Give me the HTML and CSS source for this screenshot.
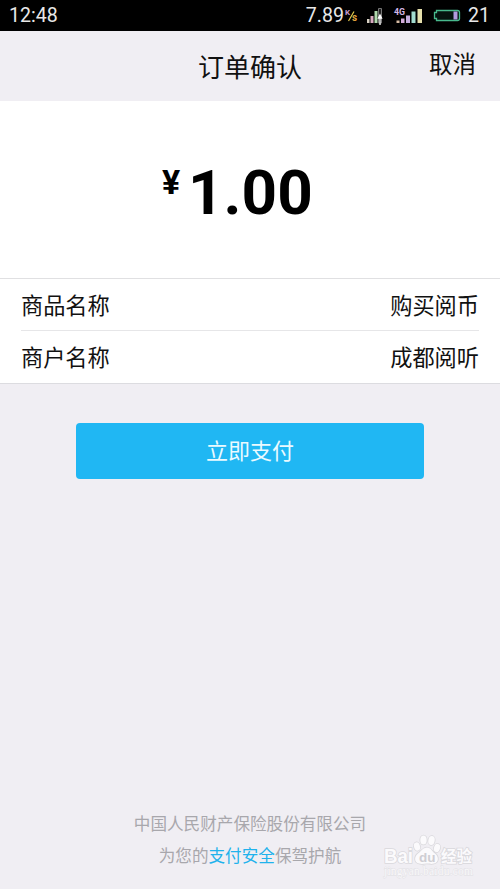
FILE: index.html
```html
<!DOCTYPE html>
<html lang="zh-CN">
<head>
<meta charset="utf-8">
<title>订单确认</title>
<link rel="stylesheet" href="styles.css">
</head>
<body>
<div class="screen">
  <div class="status">
    <span class="clock">12:48</span>
    <span class="rate">7.89</span>
    <svg class="icons" width="124" height="31" viewBox="345 0 124 31">
      <g font-family="Roboto, sans-serif" font-weight="700">
        <text x="346" y="15" font-size="8" fill="#c59bd0">K</text>
        <text x="353" y="21" font-size="10" fill="#dfa13c">s</text>
        <text x="395" y="15" font-size="9.5" fill="#d3b9e6" textLength="11" lengthAdjust="spacingAndGlyphs">4G</text>
      </g>
      <path d="M349.500 21L355 11.500" stroke="#e3c94c" stroke-width="1.200"/>
      <path d="M368 19h2.500v4H368z" fill="#d8d1c4"/>
      <path d="M371.500 16h3v7h-3z" fill="#d9abc0"/>
      <path d="M375.500 11h3v12h-3z" fill="#b0d8ad"/>
      <path d="M379.500 8.500h3V23h-3z" fill="#222" stroke="#777"/>
      <path d="M381 25V15m-1.500 3l1.500-3 1.500 3z" fill="#fff" stroke="#fff" stroke-width="1.300"/>
      <path d="M397.500 20.500h3V23h-3z" fill="#d8bda5"/>
      <path d="M402 18.500h3.500V23H402z" fill="#d4addb"/>
      <path d="M407 15.500h4V23h-4z" fill="#c4addc"/>
      <path d="M412.500 11.500h4V23h-4z" fill="#a3dccf"/>
      <path d="M418.500 9h4.500v14h-4.500z" fill="#e6e0ac"/>
      <path d="M437.500 10.500h21q2 0 2 2v6q0 2-2 2h-21v-2h-2v-6h2z" fill="#06130f" stroke="#48b98d" stroke-width="1.300"/>
      <path d="M454.500 11.500h4v8h-4z" fill="#b19be0"/>
    </svg>
    <span class="level">21</span>
  </div>
  <header class="header">
    <h1 class="title">订单确认</h1>
    <span class="cancel">取消</span>
  </header>
  <section class="price">
    <span class="yen">¥</span><span class="amount">1.00</span>
  </section>
  <section class="details">
    <div class="row"><span>商品名称</span><span>购买阅币</span></div>
    <div class="row"><span>商户名称</span><span>成都阅听</span></div>
  </section>
  <button class="pay">立即支付</button>
  <footer class="footer">
    <p>中国人民财产保险股份有限公司</p>
    <p>为您的<span class="safe">支付安全</span>保驾护航</p>
  </footer>
  <svg class="watermark" width="130" height="64" viewBox="370 825 130 64">
    <g fill="#fbfafc" stroke="#d9d8dc" stroke-width="1.600" paint-order="stroke">
      <ellipse cx="417" cy="846.500" rx="3" ry="4.200" transform="rotate(-15 417 846.500)"/>
      <ellipse cx="423.500" cy="840" rx="3.200" ry="4.500"/>
      <ellipse cx="431.500" cy="840.500" rx="3.200" ry="4.500" transform="rotate(10 431.500 840.500)"/>
      <ellipse cx="437" cy="848" rx="3" ry="4.200" transform="rotate(15 437 848)"/>
      <path d="M427 847.500c4 0 5 4 8 6 4 3 4 9-1 10-3 1-4 0-7 0s-5 1-8 0c-5-1-5-7-1-10 3-2 5-6 9-6z"/>
      <g font-family="Liberation Sans, sans-serif">
        <text x="384" y="862.500" font-size="20" font-weight="700" textLength="29" lengthAdjust="spacingAndGlyphs">Bai</text>
        <text x="441" y="862" font-family="Noto Sans CJK SC, sans-serif" font-weight="700" font-size="15.500">经验</text>
      </g>
    </g>
    <text x="419" y="861.500" font-family="Liberation Sans, sans-serif" font-weight="700" font-size="13.500" fill="#cfced3">du</text>
    <text x="384" y="874.500" font-family="Liberation Serif, serif" font-size="11.500" fill="#f9f8fa" stroke="#e0dfe3" stroke-width=".8" paint-order="stroke" textLength="89">jingyan.baidu.com</text>
  </svg>
</div>
</body>
</html>
```
FILE: styles.css
```css
* { box-sizing: border-box; }
body { margin: 0; }
.screen {
  position: relative;
  width: 500px;
  height: 889px;
  display: flex;
  flex-direction: column;
  overflow: hidden;
  background: #f0eef3;
  color: #111;
  font-family: "Noto Sans CJK SC", sans-serif;
}
.status {
  display: flex;
  align-items: center;
  height: 31px;
  padding: 0 10px 0 9px;
  background: #000;
  color: #e8e8e8;
  font-family: Roboto, sans-serif;
  font-size: 19.6px;
  line-height: 33px;
}
.rate { margin-left: auto; }
.icons { display: block; }
.header {
  display: grid;
  grid-template-columns: 1fr auto 1fr;
  align-items: center;
  height: 70px;
  padding: 0 24px;
}
.title {
  grid-column: 2;
  margin: 0;
  font-size: 26px;
  font-weight: 400;
  line-height: 38px;
}
.cancel {
  justify-self: end;
  padding-bottom: 6px;
  font-size: 23.5px;
  line-height: 34px;
}
.price {
  display: flex;
  align-items: flex-start;
  height: 177px;
  padding: 60px 0 0 162px;
  background: #fff;
  color: #000;
  font-family: Roboto, sans-serif;
  font-weight: 700;
}
.yen {
  width: 26px;
  padding-top: 4px;
  font-size: 34px;
  line-height: 34px;
}
.amount {
  font-size: 62px;
  line-height: 63px;
}
.details {
  height: 106px;
  padding: 0 21px;
  background: #fff;
  border-top: 1px solid #e0e0e2;
  border-bottom: 1px solid #dcdce0;
}
.row {
  display: flex;
  justify-content: space-between;
  height: 52px;
  font-size: 22.2px;
  line-height: 51px;
}
.row:first-child { border-bottom: 1px solid #e6e6e8; }
.pay {
  align-self: center;
  width: 348px;
  height: 56px;
  margin-top: 39px;
  padding: 0 0 3px;
  border: 0;
  border-radius: 4px;
  background: #20b7f3;
  color: #eafaff;
  font-family: inherit;
  font-size: 22px;
  font-weight: 400;
  line-height: 53px;
}
.footer {
  margin-top: auto;
  padding-bottom: 18px;
  color: #a8a7ac;
  font-size: 16.6px;
  line-height: 32px;
  text-align: center;
}
.footer p { margin: 0; }
.safe { color: #20b2ec; }
.watermark {
  position: absolute;
  right: 0;
  bottom: 0;
}
```
